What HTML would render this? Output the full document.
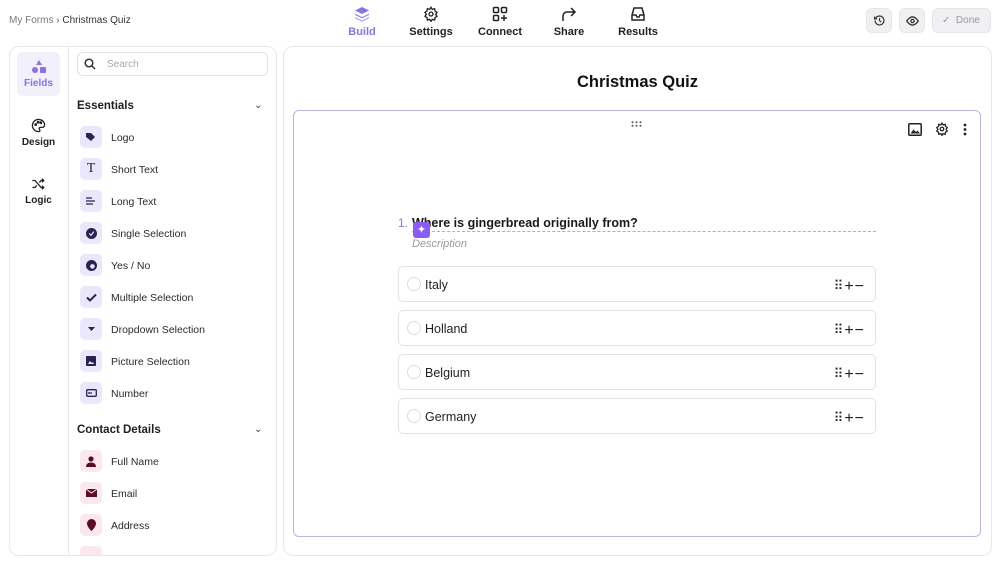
<!DOCTYPE html>
<html><head><meta charset="utf-8"><style>
*{box-sizing:border-box;margin:0;padding:0}
body{width:1000px;height:565px;background:#fff;font-family:"Liberation Sans",sans-serif;color:#1f1f1f;position:relative;overflow:hidden}
.abs{position:absolute}
.nav{position:absolute;top:6px;width:70px;text-align:center;font-size:11px;font-weight:bold;color:#222}
.nav svg{display:block;margin:0 auto 4px}
.btn{position:absolute;top:8px;height:25px;background:#f0f0f2;border:1px solid #e6e6ea;border-radius:6px}
.item{position:absolute;left:80px;height:22px;width:190px;font-size:10.5px;color:#2a2a2a;line-height:22px}
.item .ic{position:absolute;left:0;top:0;width:22px;height:22px;border-radius:5px;background:#ebe7fb;display:flex;align-items:center;justify-content:center}
.item.pk .ic{background:#fbe8ef}
.item span{position:absolute;left:31px;top:1px}
.opt{position:absolute;left:398px;width:478px;height:36px;border:1px solid #e2e2e2;border-radius:5px;font-size:12.5px}
.opt .c{position:absolute;left:8px;top:10px;width:14px;height:14px;border:1px solid #ddd;border-radius:50%}
.opt .t{position:absolute;left:26px;top:11px}
.opt .r{position:absolute;right:10px;top:10px;font-size:13px;color:#222;letter-spacing:1px}
.opt .r b{font-size:16px;font-weight:normal;position:relative;top:1px}
</style></head><body>
<div class="abs" style="left:9px;top:15px;font-size:10px;color:#777">My Forms <span style="color:#555">›</span> <span style="color:#333">Christmas Quiz</span></div>

<div class="nav" style="left:327px;color:#8b72e0"><svg width="16" height="16" viewBox="0 0 16 16" fill="#8b72e0"><path d="M8 1l7 3.5-7 3.5-7-3.5z"/><path d="M1 7.5l7 3.5 7-3.5v1.5l-7 3.5-7-3.5z" opacity=".8"/><path d="M1 11l7 3.5 7-3.5v1.2l-7 3.5-7-3.5z" opacity=".7"/></svg>Build</div>
<div class="nav" style="left:396px"><svg width="16" height="16" viewBox="0 0 24 24" fill="none" stroke="#222" stroke-width="2"><circle cx="12" cy="12" r="3"/><path d="M12 2l2 3 3.5-1 .5 3.5 3 2-2 3 2 3-3 2-.5 3.5-3.5-1-2 3-2-3-3.5 1-.5-3.5-3-2 2-3-2-3 3-2 .5-3.5 3.5 1z"/></svg>Settings</div>
<div class="nav" style="left:465px"><svg width="16" height="16" viewBox="0 0 16 16" fill="none" stroke="#222" stroke-width="1.5"><rect x="1.5" y="1.5" width="5" height="5" rx="1"/><rect x="9.5" y="1.5" width="5" height="5" rx="1"/><rect x="1.5" y="9.5" width="5" height="5" rx="1"/><path d="M12 9v6M9 12h6"/></svg>Connect</div>
<div class="nav" style="left:534px"><svg width="16" height="16" viewBox="0 0 16 16" fill="none" stroke="#222" stroke-width="1.5"><path d="M2 15V10a4 4 0 014-4h8M10 2l4 4-4 4"/></svg>Share</div>
<div class="nav" style="left:603px"><svg width="16" height="16" viewBox="0 0 16 16" fill="none" stroke="#222" stroke-width="1.5"><path d="M2 9l2-7h8l2 7v5H2z"/><path d="M2 9h4l1 2h2l1-2h4"/></svg>Results</div>

<div class="btn" style="left:866px;width:26px"><svg class="abs" style="left:6px;top:5px" width="13" height="13" viewBox="0 0 16 16" fill="none" stroke="#333" stroke-width="1.5"><path d="M2.5 8a5.5 5.5 0 105.5-5.5A5.5 5.5 0 003 6M2 3v3h3M8 5v3l2 2"/></svg></div>
<div class="btn" style="left:899px;width:26px"><svg class="abs" style="left:6px;top:6px" width="13" height="12" viewBox="0 0 16 14" fill="none" stroke="#333" stroke-width="1.6"><path d="M1 7s3-5 7-5 7 5 7 5-3 5-7 5-7-5-7-5z"/><circle cx="8" cy="7" r="2"/></svg></div>
<div class="btn" style="left:932px;width:59px;font-size:10px;color:#999;line-height:23px;padding-left:9px">✓&nbsp; Done</div>

<div class="abs" style="left:9px;top:46px;width:268px;height:510px;border:1px solid #e8e8e8;border-radius:10px"></div>
<div class="abs" style="left:68px;top:47px;width:1px;height:508px;background:#e8e8e8"></div>
<div class="abs" style="left:17px;top:52px;width:43px;height:44px;background:#f2f0fa;border-radius:6px;text-align:center;font-size:10px;font-weight:bold;color:#8b72e0;padding-top:8px"><svg width="16" height="14" viewBox="0 0 16 14" fill="#8b72e0" style="display:block;margin:0 auto 4px"><path d="M8 0l3 5H5z"/><circle cx="4" cy="10" r="3"/><rect x="9" y="7" width="6" height="6" rx="1"/></svg>Fields</div>
<div class="abs" style="left:17px;top:118px;width:43px;text-align:center;font-size:10px;font-weight:bold"><svg width="15" height="15" viewBox="0 0 16 16" fill="none" stroke="#222" stroke-width="1.4" style="display:block;margin:0 auto 4px"><path d="M8 1.5a6.5 6.5 0 000 13c1 0 1.5-.6 1.5-1.3 0-.9-.8-1.2-.8-2s.6-1.2 1.5-1.2h2a2.5 2.5 0 002.3-2.5C14.5 4 11.6 1.5 8 1.5z"/><circle cx="5" cy="7" r=".8"/><circle cx="7.5" cy="4.5" r=".8"/><circle cx="10.5" cy="5" r=".8"/></svg>Design</div>
<div class="abs" style="left:17px;top:177px;width:43px;text-align:center;font-size:10px;font-weight:bold"><svg width="15" height="14" viewBox="0 0 16 16" fill="none" stroke="#222" stroke-width="1.5" style="display:block;margin:0 auto 4px"><path d="M1 4h3l7 8h3M1 12h3l2-2.3M9 6.3L11 4h3M12 2l2 2-2 2M12 10l2 2-2 2"/></svg>Logic</div>

<div class="abs" style="left:77px;top:52px;width:191px;height:24px;border:1px solid #e3e3e3;border-radius:6px;font-size:10px;color:#aaa;line-height:23px;padding-left:29px">Search<svg class="abs" style="left:6px;top:5px" width="12" height="12" viewBox="0 0 12 12" fill="none" stroke="#333" stroke-width="1.5"><circle cx="5" cy="5" r="3.8"/><path d="M8 8l3 3"/></svg></div>
<div class="abs" style="left:77px;top:100px;font-size:11.5px;font-weight:bold">Essentials</div>
<div class="abs" style="left:254px;top:100px;font-size:10px;color:#444">⌄</div>
<div class="item" style="top:126px"><div class="ic"><svg width="11" height="10" viewBox="0 0 11 10" fill="#2b2250"><path d="M0 1h5l4 4-4 4-5-4z"/></svg></div><span>Logo</span></div>
<div class="item" style="top:158px"><div class="ic" style="font-family:'Liberation Serif',serif;font-size:14px;color:#2b2250">T</div><span>Short Text</span></div>
<div class="item" style="top:190px"><div class="ic"><svg width="10" height="9" viewBox="0 0 10 9" stroke="#2b2250" stroke-width="1.3"><path d="M0 1h6M0 4h9M0 7h7"/></svg></div><span>Long Text</span></div>
<div class="item" style="top:222px"><div class="ic"><svg width="11" height="11" viewBox="0 0 12 12"><circle cx="6" cy="6" r="6" fill="#2b2250"/><path d="M3.5 6l2 2 3-4" stroke="#ebe7fb" stroke-width="1.3" fill="none"/></svg></div><span>Single Selection</span></div>
<div class="item" style="top:254px"><div class="ic"><svg width="11" height="11" viewBox="0 0 12 12"><circle cx="6" cy="6" r="6" fill="#2b2250"/><circle cx="7" cy="7" r="2.5" fill="#ebe7fb"/></svg></div><span>Yes / No</span></div>
<div class="item" style="top:286px"><div class="ic"><svg width="11" height="9" viewBox="0 0 11 9" fill="none" stroke="#2b2250" stroke-width="2"><path d="M1 4.5l3 3 6-6"/></svg></div><span>Multiple Selection</span></div>
<div class="item" style="top:318px"><div class="ic"><svg width="7" height="4" viewBox="0 0 7 4" fill="#2b2250"><path d="M0 0h7L3.5 4z"/></svg></div><span>Dropdown Selection</span></div>
<div class="item" style="top:350px"><div class="ic"><svg width="10" height="10" viewBox="0 0 10 10"><rect width="10" height="10" rx="1" fill="#2b2250"/><path d="M2 8l2-3 2 2 1-1 1 2z" fill="#ebe7fb"/></svg></div><span>Picture Selection</span></div>
<div class="item" style="top:382px"><div class="ic"><svg width="11" height="8" viewBox="0 0 11 8" fill="none" stroke="#2b2250" stroke-width="1.3"><rect x=".7" y=".7" width="9.6" height="6.6" rx="1"/><path d="M3 3v2M5 3v2"/></svg></div><span>Number</span></div>
<div class="abs" style="left:77px;top:424px;font-size:11.5px;font-weight:bold">Contact Details</div>
<div class="abs" style="left:254px;top:424px;font-size:10px;color:#444">⌄</div>
<div class="item pk" style="top:450px"><div class="ic"><svg width="10" height="11" viewBox="0 0 10 11" fill="#5a0c2a"><circle cx="5" cy="3" r="2.6"/><path d="M0 11c0-3 2-4.5 5-4.5s5 1.5 5 4.5z"/></svg></div><span>Full Name</span></div>
<div class="item pk" style="top:482px"><div class="ic"><svg width="11" height="8" viewBox="0 0 11 8" fill="#5a0c2a"><path d="M0 0h11v8H0z"/><path d="M0 0l5.5 4L11 0" stroke="#fbe8ef" fill="none"/></svg></div><span>Email</span></div>
<div class="item pk" style="top:514px"><div class="ic"><svg width="9" height="12" viewBox="0 0 9 12" fill="#5a0c2a"><path d="M4.5 0A4.5 4.5 0 000 4.5C0 8 4.5 12 4.5 12S9 8 9 4.5A4.5 4.5 0 004.5 0z"/></svg></div><span>Address</span></div>
<div class="abs" style="left:80px;top:546px;width:22px;height:9px;background:#fbe8ef;border-radius:5px 5px 0 0"></div>

<div class="abs" style="left:283px;top:46px;width:709px;height:510px;border:1px solid #e8e8e8;border-radius:10px"></div>
<div class="abs" style="left:283px;top:73px;width:709px;text-align:center;font-size:16.5px;font-weight:bold;color:#111">Christmas Quiz</div>
<div class="abs" style="left:293px;top:110px;width:688px;height:427px;border:1.5px solid #bcb4e0;border-radius:6px"></div>
<svg class="abs" style="left:631px;top:121px" width="11" height="6" viewBox="0 0 11 6" fill="#555"><circle cx="1.5" cy="1.2" r="1"/><circle cx="5.5" cy="1.2" r="1"/><circle cx="9.5" cy="1.2" r="1"/><circle cx="1.5" cy="4.8" r="1"/><circle cx="5.5" cy="4.8" r="1"/><circle cx="9.5" cy="4.8" r="1"/></svg>
<svg class="abs" style="left:908px;top:123px" width="14" height="13" viewBox="0 0 14 13"><rect x=".8" y=".8" width="12.4" height="11.4" rx="1" fill="none" stroke="#222" stroke-width="1.5"/><path d="M2.5 10.5l3-4 2.5 2.5 1.5-1.5 2.5 3z" fill="#222"/></svg>
<svg class="abs" style="left:935px;top:122px" width="14" height="14" viewBox="0 0 24 24" fill="none" stroke="#222" stroke-width="2.2"><circle cx="12" cy="12" r="3"/><path d="M12 2l2 3 3.5-1 .5 3.5 3 2-2 3 2 3-3 2-.5 3.5-3.5-1-2 3-2-3-3.5 1-.5-3.5-3-2 2-3-2-3 3-2 .5-3.5 3.5 1z"/></svg>
<svg class="abs" style="left:963px;top:123px" width="4" height="13" viewBox="0 0 4 13" fill="#222"><circle cx="2" cy="2" r="1.4"/><circle cx="2" cy="6.5" r="1.4"/><circle cx="2" cy="11" r="1.4"/></svg>

<div class="abs" style="left:398px;top:216px;font-size:12px;color:#8b72e0">1.</div>
<div class="abs" style="left:412px;top:216px;font-size:12.5px;font-weight:bold;color:#1a1a1a">Where is gingerbread originally from?</div>
<div class="abs" style="left:412px;top:231px;width:464px;border-top:1px dashed #b0a8d8"></div>
<div class="abs" style="left:413px;top:222px;width:17px;height:16px;background:#8a5cf0;border-radius:3px;color:#fff;font-size:11px;text-align:center;line-height:16px">✦</div>
<div class="abs" style="left:412px;top:238px;font-size:11px;font-style:italic;color:#999">Description</div>

<div class="opt" style="top:266px"><div class="c"></div><div class="t">Italy</div><div class="r">⠿<b>+−</b></div></div>
<div class="opt" style="top:310px"><div class="c"></div><div class="t">Holland</div><div class="r">⠿<b>+−</b></div></div>
<div class="opt" style="top:354px"><div class="c"></div><div class="t">Belgium</div><div class="r">⠿<b>+−</b></div></div>
<div class="opt" style="top:398px"><div class="c"></div><div class="t">Germany</div><div class="r">⠿<b>+−</b></div></div>
</body></html>
